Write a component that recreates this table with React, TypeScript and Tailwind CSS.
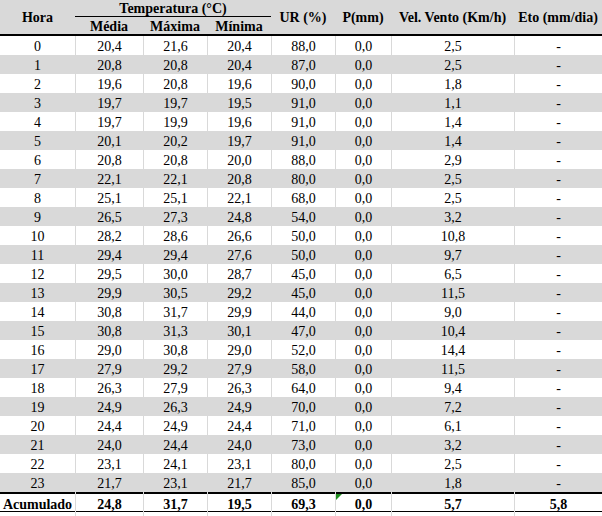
import React from "react";

const rows: string[][] = [
  ["0", "20,4", "21,6", "20,4", "88,0", "0,0", "2,5", "-"],
  ["1", "20,8", "20,8", "20,4", "87,0", "0,0", "2,5", "-"],
  ["2", "19,6", "20,8", "19,6", "90,0", "0,0", "1,8", "-"],
  ["3", "19,7", "19,7", "19,5", "91,0", "0,0", "1,1", "-"],
  ["4", "19,7", "19,9", "19,6", "91,0", "0,0", "1,4", "-"],
  ["5", "20,1", "20,2", "19,7", "91,0", "0,0", "1,4", "-"],
  ["6", "20,8", "20,8", "20,0", "88,0", "0,0", "2,9", "-"],
  ["7", "22,1", "22,1", "20,8", "80,0", "0,0", "2,5", "-"],
  ["8", "25,1", "25,1", "22,1", "68,0", "0,0", "2,5", "-"],
  ["9", "26,5", "27,3", "24,8", "54,0", "0,0", "3,2", "-"],
  ["10", "28,2", "28,6", "26,6", "50,0", "0,0", "10,8", "-"],
  ["11", "29,4", "29,4", "27,6", "50,0", "0,0", "9,7", "-"],
  ["12", "29,5", "30,0", "28,7", "45,0", "0,0", "6,5", "-"],
  ["13", "29,9", "30,5", "29,2", "45,0", "0,0", "11,5", "-"],
  ["14", "30,8", "31,7", "29,9", "44,0", "0,0", "9,0", "-"],
  ["15", "30,8", "31,3", "30,1", "47,0", "0,0", "10,4", "-"],
  ["16", "29,0", "30,8", "29,0", "52,0", "0,0", "14,4", "-"],
  ["17", "27,9", "29,2", "27,9", "58,0", "0,0", "11,5", "-"],
  ["18", "26,3", "27,9", "26,3", "64,0", "0,0", "9,4", "-"],
  ["19", "24,9", "26,3", "24,9", "70,0", "0,0", "7,2", "-"],
  ["20", "24,4", "24,9", "24,4", "71,0", "0,0", "6,1", "-"],
  ["21", "24,0", "24,4", "24,0", "73,0", "0,0", "3,2", "-"],
  ["22", "23,1", "24,1", "23,1", "80,0", "0,0", "2,5", "-"],
  ["23", "21,7", "23,1", "21,7", "85,0", "0,0", "1,8", "-"],
];

const total = ["Acumulado", "24,8", "31,7", "19,5", "69,3", "0,0", "5,7", "5,8"];

const cols = "grid grid-cols-[75px_68px_64px_64px_64px_56px_123px_88px]";

export default function App() {
  return (
    <div className="w-[602px] h-[516px] overflow-hidden bg-white font-['Liberation_Serif',serif] text-[14px] text-black">
      {/* Header */}
      <div className={`${cols} grid-rows-[17px_17px] h-[36px] bg-[#d9d9d9] border-b-2 border-black font-bold`}>
        <div className="row-span-2 flex items-center justify-center">Hora</div>
        <div className="col-span-3 flex items-end justify-center border-b border-black leading-[14px]">
          Temperatura (°C)
        </div>
        <div className="row-span-2 col-start-5 flex items-center justify-center">UR (%)</div>
        <div className="row-span-2 flex items-center justify-center">P(mm)</div>
        <div className="row-span-2 flex items-center justify-center">Vel. Vento (Km/h)</div>
        <div className="row-span-2 flex items-center justify-center">Eto (mm/dia)</div>
        <div className="col-start-2 row-start-2 flex items-end justify-center leading-[14px]">Média</div>
        <div className="col-start-3 row-start-2 flex items-end justify-center leading-[14px]">Máxima</div>
        <div className="col-start-4 row-start-2 flex items-end justify-center leading-[14px]">Mínima</div>
      </div>

      {/* Body */}
      {rows.map((r, i) => (
        <div key={i} className={`${cols} h-[19px] ${i % 2 === 1 ? "bg-[#d9d9d9]" : "bg-white"}`}>
          {r.map((v, j) => (
            <div
              key={j}
              className={`flex items-center justify-center ${j > 0 ? "border-l border-[#d9d9d9]" : ""}`}
            >
              {v}
            </div>
          ))}
        </div>
      ))}

      {/* Total row */}
      <div className={`${cols} h-[20px] bg-white border-t-2 border-b border-black font-bold`}>
        {total.map((v, j) => (
          <div
            key={j}
            className={`relative flex items-center justify-center ${j > 0 ? "border-l border-[#d9d9d9]" : ""}`}
          >
            {j === 5 && (
              <span className="absolute left-0 top-0 w-0 h-0 border-t-[6px] border-t-[#1f8f1f] border-r-[6px] border-r-transparent" />
            )}
            {v}
          </div>
        ))}
      </div>

      {/* Trailing empty row */}
      <div className={`${cols} h-[20px] bg-white`}>
        {total.map((_, j) => (
          <div key={j} className={j > 0 ? "border-l border-[#d9d9d9]" : ""} />
        ))}
      </div>
    </div>
  );
}
